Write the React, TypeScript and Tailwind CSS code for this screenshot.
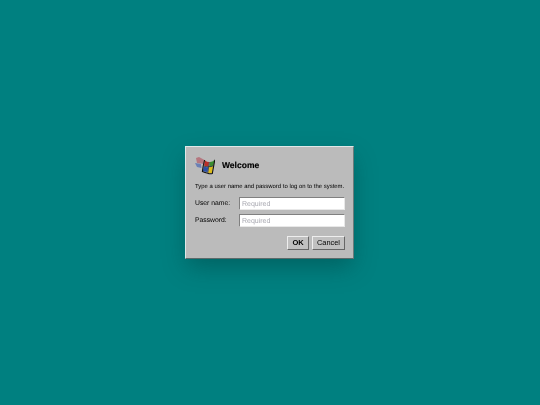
export default function App() {
  return (
    <div className="w-[540px] h-[405px] bg-[#008080] flex items-center justify-center font-['Liberation_Sans',Arial,sans-serif] text-black antialiased [text-rendering:geometricPrecision]">
      <div className="w-[169px] h-[113px] mr-[1px] bg-[#bbbbbb] border border-t-[#dfe8e8] border-l-[#dfe8e8] border-r-[#6a7a7a] border-b-[#5a6a6a] shadow-[0_10px_22px_-2px_rgba(0,50,50,0.38)] pl-[9px] pr-[8px] flex flex-col blur-[0.35px]">
        <div className="flex items-center gap-[7px] h-[26px] mt-[5px]">
          <svg width="20" height="20" viewBox="0 0 20 20">
            <path d="M1 3 L4 2 L9.5 5 L9 9 L2 8 Z" fill="#b5777f" />
            <path d="M0 8 L6 9 L6.5 13 L2 12 Z" fill="#6b80b5" />
            <path d="M10 5.5 Q12 7 14 7 L13.5 11 Q11 11.5 9 10.5 Z" fill="#b92e28" />
            <path d="M15 7 Q17.5 7 19.5 5 L18.5 10.5 Q16.5 12 14.3 11.5 Z" fill="#3a8c30" />
            <path d="M8.8 11.5 Q11 12.5 13.2 12 L12.5 17 Q10 17 7.8 16 Z" fill="#2a50a8" />
            <path d="M14 12.3 Q16.5 12.5 18.3 11.2 L17 18 Q15 18.7 13.2 18 Z" fill="#dcbc1c" />
            <path d="M9.6 5 L8.2 11 L7.4 16.5 Q10 17.8 12.8 18.2 Q15 19.2 17.3 18.5 L19.8 4.8" stroke="#111111" strokeWidth="1.1" fill="none" />
            <path d="M14.4 7 L12.8 17.8 M8.5 11 Q11 12 13.5 11.6 Q16 12 18.5 10.8" stroke="#222222" strokeWidth="0.7" fill="none" />
          </svg>
          <span className="text-[8.5px] font-bold leading-none [-webkit-text-stroke:0.15px_black]">Welcome</span>
        </div>
        <p className="text-[5.95px] leading-[9px] mt-[5px] whitespace-nowrap">Type a user name and password to log on to the system.</p>
        <div className="flex items-center mt-[5px] h-[13px]">
          <span className="text-[6.8px] w-[44px] shrink-0 pt-[1px]">User name:</span>
          <Field />
        </div>
        <div className="flex items-center mt-[4px] h-[13px]">
          <span className="text-[6.8px] w-[44px] shrink-0 pt-[1px]">Password:</span>
          <Field />
        </div>
        <div className="flex justify-end gap-[3px] mt-[9px]">
          <button className="w-[22px] h-[14px] bg-[#c0c0c0] border border-t-[#eeeeee] border-l-[#eeeeee] border-r-[#666666] border-b-[#666666] text-[7.5px] font-bold leading-none">OK</button>
          <button className="w-[33px] h-[14px] bg-[#c0c0c0] border border-t-[#eeeeee] border-l-[#eeeeee] border-r-[#666666] border-b-[#666666] text-[7.4px] leading-none">Cancel</button>
        </div>
      </div>
    </div>
  );
}

function Field() {
  return (
    <div className="w-[106px] h-[13px] bg-white border border-t-[#808080] border-l-[#808080] border-r-[#e8e8e8] border-b-[#e8e8e8] pl-[2px] flex items-center">
      <span className="text-[7px] leading-none text-[#a8a8b0] pt-[1px]">Required</span>
    </div>
  );
}
